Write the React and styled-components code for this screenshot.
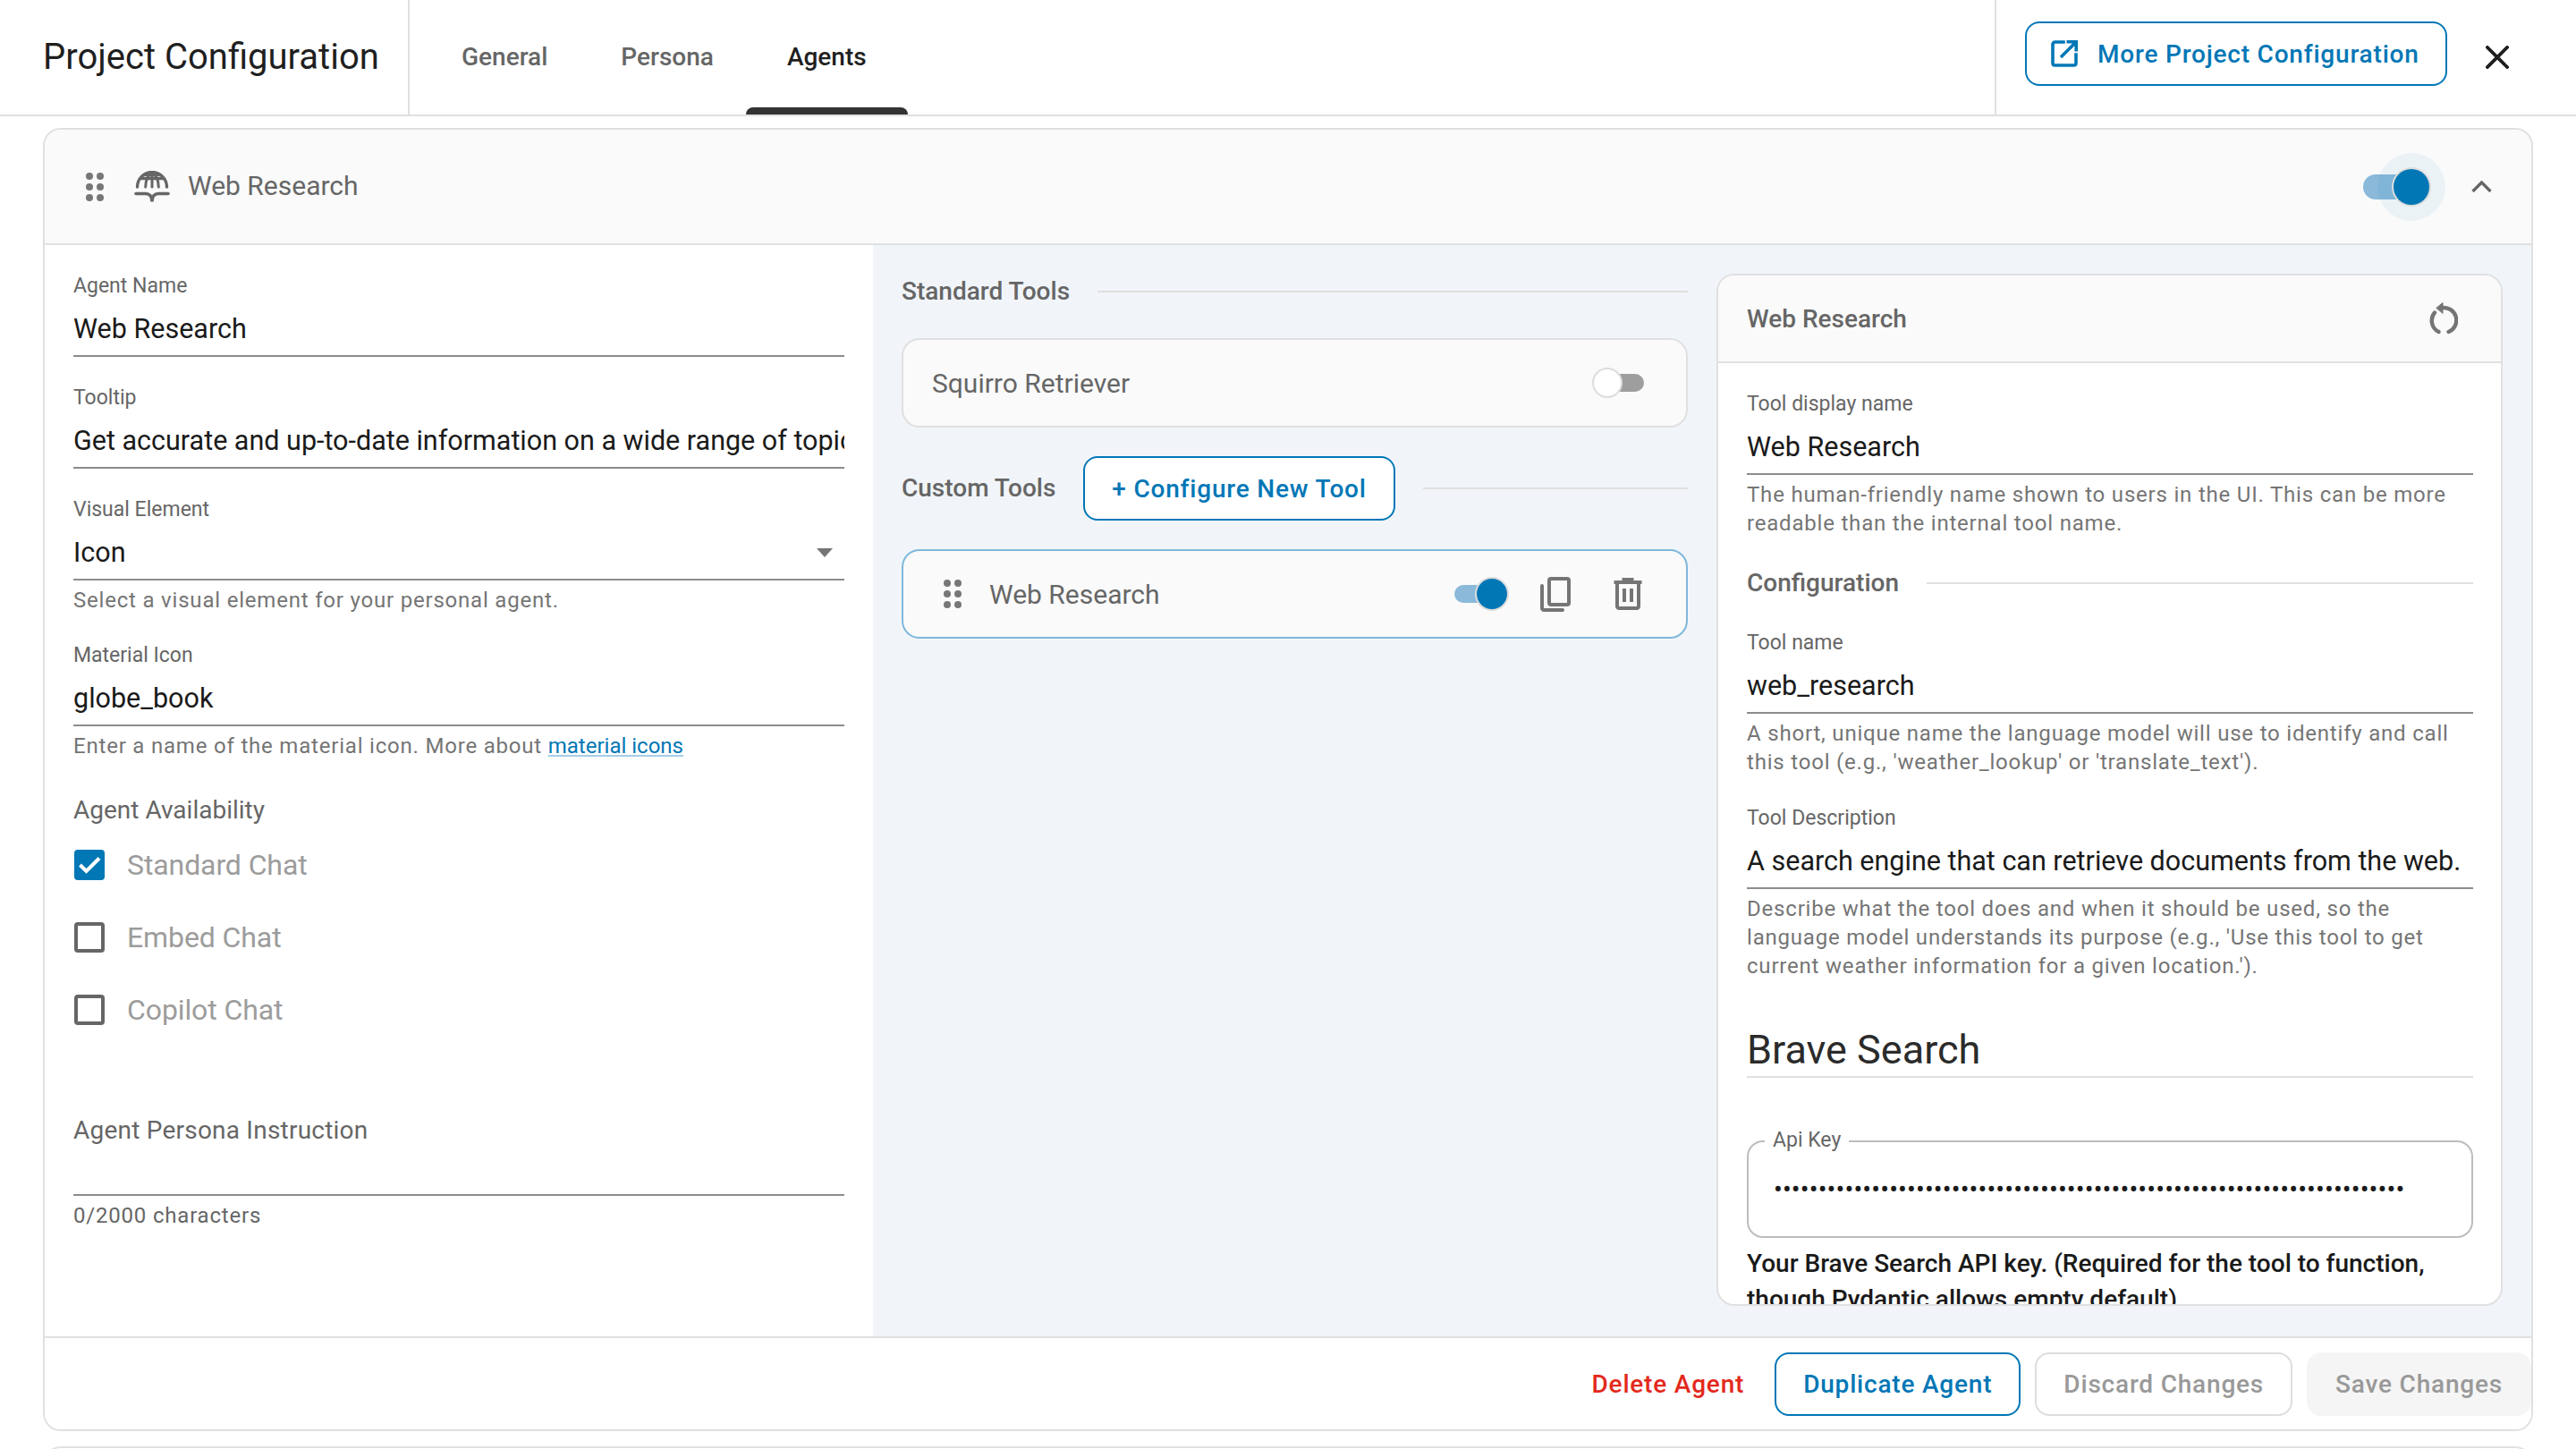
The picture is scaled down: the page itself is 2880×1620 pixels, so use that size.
import React from 'react';
import styled, { createGlobalStyle } from 'styled-components';

const primary = '#0277b6';
const line = '#e0e0e0';

const GlobalStyle = createGlobalStyle`
    html, body {
        margin: 0;
        padding: 0;
        background: #fff;
    }
    body {
        font-family: Roboto, "Liberation Sans", sans-serif;
        color: #1a1a1a;
        height: 1620px;
        overflow: hidden;
    }
    * {
        box-sizing: border-box;
    }
`;

const TopBar = styled.header`
    display: flex;
    align-items: stretch;
    height: 130px;
    border-bottom: 2px solid ${line};
`;

const PageTitle = styled.div`
    width: 458px;
    padding-left: 48px;
    border-right: 2px solid ${line};
    font-size: 40px;
    line-height: 128px;
    color: #1f1f1f;
`;

const Tabs = styled.nav`
    display: flex;
    flex: 1;
    padding-left: 17px;
`;

const Tab = styled.div`
    position: relative;
    padding: 0 41px;
    font-size: 28px;
    font-weight: 500;
    line-height: 128px;
    color: ${(p) => (p.$active ? '#1f1f1f' : '#666')};
    &::after {
        content: '';
        display: ${(p) => (p.$active ? 'block' : 'none')};
        position: absolute;
        left: -5px;
        right: -5px;
        bottom: 0;
        height: 8px;
        border-radius: 8px 8px 0 0;
        background: #333;
    }
`;

const TopActions = styled.div`
    display: flex;
    align-items: center;
    padding-left: 32px;
    padding-right: 75px;
    gap: 43px;
    border-left: 2px solid ${line};
`;

const OutlineButton = styled.button`
    display: inline-flex;
    align-items: center;
    justify-content: center;
    gap: 22px;
    height: ${(p) => (p.$tall ? '72px' : '71px')};
    padding: 0 30px;
    background: #fff;
    border: 2px solid ${(p) => (p.$muted ? '#ddd' : primary)};
    border-radius: 16px;
    font-family: inherit;
    font-size: 28px;
    font-weight: 500;
    letter-spacing: 0.8px;
    color: ${(p) => (p.$muted ? '#999' : primary)};
    white-space: nowrap;
`;

const MoreButton = styled(OutlineButton)`
    width: 472px;
    margin-bottom: 8px;
    justify-content: flex-start;
    padding: 0 26px 0 27px;
`;

const Card = styled.section`
    display: flex;
    flex-direction: column;
    height: 1457px;
    margin: 13px 48px 0;
    border: 2px solid ${line};
    border-radius: 20px;
    overflow: hidden;
`;

const CardHeader = styled.div`
    display: flex;
    align-items: center;
    height: 129px;
    flex: none;
    padding: 0 44px 0 46px;
    background: #fafafa;
    border-bottom: 2px solid ${line};
    font-size: 30px;
    color: #666;
`;

const HeaderLabel = styled.span`
    flex: 1;
    margin-left: 20px;
    padding-bottom: 3px;
`;

const CardBody = styled.div`
    display: flex;
    height: 1220px;
    flex: none;
`;

const LeftColumn = styled.div`
    display: flex;
    flex-direction: column;
    gap: 29px;
    flex: none;
    width: 926px;
    padding: 29px 32px 0;
`;

const RightArea = styled.div`
    display: grid;
    grid-template-columns: 1fr 1fr;
    gap: 32px;
    flex: 1;
    min-width: 0;
    padding: 32px 32px 34px;
    background: #f1f5f9;
`;

const ToolsColumn = styled.div`
    display: flex;
    flex-direction: column;
    gap: 32px;
    min-width: 0;
`;

const SectionRow = styled.div`
    display: flex;
    align-items: center;
    gap: 31px;
    font-size: 28px;
    font-weight: 500;
    line-height: 40px;
    color: #666;
    &::after {
        content: '';
        flex: 1;
        height: 2px;
        background: ${line};
    }
`;

const ToolCard = styled.div`
    display: flex;
    align-items: center;
    height: 100px;
    padding: 0 ${(p) => (p.$active ? '49px' : '47px')} 0 ${(p) => (p.$active ? '45px' : '32px')};
    background: #fafafa;
    border: 2px solid ${(p) => (p.$active ? '#7fb8dc' : line)};
    border-radius: 20px;
    font-size: 30px;
    color: #666;
`;

const ToolName = styled.span`
    flex: 1;
    margin-left: ${(p) => (p.$indent ? '31px' : '0')};
`;

const Field = styled.div`
    display: flex;
    flex-direction: column;
`;

const Label = styled.div`
    height: 32px;
    padding-top: 2px;
    font-size: 23px;
    line-height: 30px;
    color: #666;
`;

const Value = styled.div`
    display: flex;
    align-items: center;
    justify-content: space-between;
    height: 64px;
    padding-top: 3px;
    font-size: 30.5px;
    line-height: 59px;
    white-space: nowrap;
    overflow: hidden;
    color: #1a1a1a;
    border-bottom: 2px solid #8c8c8c;
`;

const Helper = styled.div`
    margin-top: 6px;
    font-size: 24px;
    line-height: 32px;
    letter-spacing: 0.8px;
    color: #757575;
`;

const HelperLink = styled.a`
    letter-spacing: 0;
    color: ${primary};
    text-decoration-color: #a5cde6;
`;

const GroupTitle = styled.div`
    margin-top: 7px;
    font-size: 28px;
    line-height: 40px;
    color: #666;
`;

const Checks = styled.div`
    margin-top: -29px;
`;

const CheckRow = styled.div`
    display: flex;
    align-items: center;
    gap: 25px;
    height: 81px;
    padding-left: 1px;
    font-size: 32px;
    letter-spacing: -0.1px;
    color: #9c9c9c;
`;

const CheckBox = styled.span`
    display: flex;
    align-items: center;
    justify-content: center;
    width: 34px;
    height: 34px;
    border-radius: 4px;
    background: ${(p) => (p.$checked ? primary : 'transparent')};
    border: ${(p) => (p.$checked ? 'none' : '4px solid #666')};
`;

const PersonaField = styled(Field)`
    margin-top: 46px;
`;

const PersonaLabel = styled.div`
    font-size: 28px;
    line-height: 40px;
    letter-spacing: 0.22px;
    color: #666;
`;

const PersonaInput = styled.div`
    height: 53px;
    border-bottom: 2px solid #8c8c8c;
`;

const CountText = styled(Helper)`
    color: #666;
`;

const DetailPanel = styled.aside`
    display: flex;
    flex-direction: column;
    min-width: 0;
    background: #fff;
    border: 2px solid ${line};
    border-radius: 20px;
    overflow: hidden;
`;

const DetailHeader = styled.div`
    display: flex;
    align-items: center;
    justify-content: space-between;
    flex: none;
    height: 98px;
    padding: 0 48px 0 32px;
    background: #fafafa;
    border-bottom: 2px solid ${line};
    font-size: 28px;
    font-weight: 500;
    color: #666;
`;

const DetailScroll = styled.div`
    display: flex;
    flex-direction: column;
    gap: 30px;
    flex: 1;
    min-height: 0;
    overflow: hidden;
    padding: 29px 31px 0 32px;
`;

const ConfigRow = styled(SectionRow)`
    margin-top: 1px;
`;

const SearchTitle = styled.h2`
    margin: 18px 0 0;
    padding: 0;
    font-size: 45px;
    font-weight: 400;
    line-height: 59px;
    color: #2b2b2b;
    border-bottom: 2px solid ${line};
`;

const KeyBox = styled.div`
    position: relative;
    display: flex;
    align-items: center;
    flex: none;
    height: 109px;
    margin-top: 40px;
    padding: 0 28px;
    border: 2px solid #bdbdbd;
    border-radius: 18px;
`;

const KeyLabel = styled.span`
    position: absolute;
    top: -17px;
    left: 18px;
    padding: 0 9px;
    background: #fff;
    font-size: 23px;
    line-height: 30px;
    color: #666;
`;

const KeyDots = styled.span`
    font-size: 29px;
    letter-spacing: 0.15px;
    white-space: nowrap;
    color: #1a1a1a;
`;

const KeyHelp = styled.div`
    margin-top: -21px;
    font-size: 28px;
    font-weight: 500;
    line-height: 40px;
    color: #1a1a1a;
`;

const CardFooter = styled.footer`
    display: flex;
    align-items: center;
    justify-content: flex-end;
    gap: 16px;
    flex: 1;
    background: #fff;
    border-top: 2px solid ${line};
`;

const DeleteButton = styled.button`
    padding: 0 18px 0 14px;
    background: none;
    border: none;
    font-family: inherit;
    font-size: 28px;
    font-weight: 500;
    letter-spacing: 0.8px;
    color: #e3291c;
`;

const SaveButton = styled(OutlineButton)`
    background: #f5f5f5;
    border-color: #f5f5f5;
    color: #999;
`;

const NextCard = styled.div`
    height: 40px;
    margin: 17px 48px 0;
    border: 2px solid ${line};
    border-radius: 20px 20px 0 0;
`;

const SwitchWrap = styled.span`
    position: relative;
    display: inline-block;
    flex: none;
    width: ${(p) => (p.$small ? '56px' : '68px')};
    height: ${(p) => (p.$small ? '20px' : '28px')};
    margin-right: ${(p) => (p.$halo ? '53px' : '0')};
    border-radius: 14px;
    background: ${(p) => (p.$on ? '#8ab9da' : '#9e9e9e')};
`;

const SwitchThumb = styled.span`
    position: absolute;
    top: 50%;
    width: ${(p) => (p.$small ? '34px' : '40px')};
    height: ${(p) => (p.$small ? '34px' : '40px')};
    border-radius: 50%;
    transform: translateY(-50%);
    left: ${(p) => (p.$on ? (p.$small ? '25px' : '34px') : '-2px')};
    background: ${(p) => (p.$on ? primary : '#fff')};
    border: ${(p) => (p.$on ? 'none' : '2px solid #ddd')};
    box-shadow: ${(p) => (p.$on ? '0 0 0 2px #dcdcdc' : 'none')};
`;

const Halo = styled.span`
    position: absolute;
    top: -24px;
    left: 16px;
    width: 76px;
    height: 76px;
    border-radius: 50%;
    background: rgba(2, 119, 182, 0.06);
`;

const ToolIcons = styled.div`
    display: flex;
    align-items: center;
    margin-left: 40px;
    gap: 48px;
`;

const DropArrow = styled.span`
    width: 0;
    height: 0;
    margin-right: 13px;
    border-left: 9.5px solid transparent;
    border-right: 9.5px solid transparent;
    border-top: 10px solid #757575;
`;

const Dots = ({ color = '#777' }) => (
    <svg width="20" height="32" viewBox="0 0 20 32" fill={color}>
        {[4, 16, 28].map((y) => (
            <React.Fragment key={y}>
                <circle cx="4" cy={y} r="4" />
                <circle cx="16" cy={y} r="4" />
            </React.Fragment>
        ))}
    </svg>
);

const GlobeBook = () => (
    <svg width="40" height="36" viewBox="0 0 40 36" fill="none" stroke="#666" strokeLinecap="round" style={{ marginLeft: 34 }}>
        <path d="M3.5 18A16.5 16.5 0 0 1 36.5 18" strokeWidth="3.4" />
        <path d="M7.5 8.5H32.5" strokeWidth="3.4" />
        <path d="M13 4.5H27" strokeWidth="3" />
        <path d="M12.7 18C12.7 11 15.5 5 20 2C24.5 5 27.3 11 27.3 18" strokeWidth="3" />
        <path d="M20 2V18" strokeWidth="3" />
        <path d="M2 25.5H13C17 25.5 20 28.5 20 34.5C20 28.5 23 25.5 27 25.5H38" strokeWidth="3.6" />
    </svg>
);

const ExternalIcon = () => (
    <svg width="30" height="30" viewBox="0 0 30 30" fill="none" stroke={primary} strokeWidth="3.6">
        <path d="M14 2H4.5C3 2 2 3 2 4.5V25.5C2 27 3 28 4.5 28H25.5C27 28 28 27 28 25.5V16" strokeLinecap="square" />
        <path d="M11 19L27 3M17.5 1.8H28.2V12.5" />
    </svg>
);

const CloseIcon = () => (
    <svg width="26" height="26" viewBox="0 0 26 26" stroke="#1f1f1f" strokeWidth="3.8" strokeLinecap="square">
        <path d="M2 2L24 24M24 2L2 24" />
    </svg>
);

const Chevron = () => (
    <svg width="23" height="13" viewBox="0 0 23 13" fill="none" stroke="#666" strokeWidth="3.4">
        <path d="M1.5 12L11.5 2L21.5 12" />
    </svg>
);

const CopyIcon = () => (
    <svg width="34" height="39" viewBox="0 0 34 39" fill="none" stroke="#757575" strokeWidth="4" strokeLinejoin="round">
        <rect x="10" y="2" width="22" height="29" rx="2" />
        <path d="M2 10V35C2 36 3 37 4 37H25" strokeLinecap="round" />
    </svg>
);

const TrashIcon = () => (
    <svg width="32" height="36" viewBox="0 0 32 36" fill="none" stroke="#757575" strokeWidth="4">
        <path d="M0.5 5H31.5" />
        <path d="M11 4V1.5H21V4" strokeWidth="3" />
        <path d="M4 6V32C4 33 5 34 6 34H26C27 34 28 33 28 32V6" />
        <path d="M12 12V27M20 12V27" />
    </svg>
);

const ResetIcon = () => (
    <svg width="32" height="36" viewBox="0 0 32 36" fill="none" stroke="#757575" strokeWidth="4.4" strokeLinecap="round">
        <path d="M6 11.5A14 14 0 0 0 10.5 33" />
        <path d="M14 6.2A14 14 0 0 1 21.5 33" />
        <path d="M8 6.2L15 0.5V12Z" fill="#757575" strokeWidth="1" strokeLinejoin="round" />
    </svg>
);

const CheckMark = () => (
    <svg width="26" height="22" viewBox="0 0 26 22" fill="none" stroke="#fff" strokeWidth="4">
        <path d="M2.5 11L9.5 18L24 3.5" />
    </svg>
);

const Switch = ({ on, small, halo }) => (
    <SwitchWrap $on={on} $small={small} $halo={halo}>
        {halo && <Halo />}
        <SwitchThumb $on={on} $small={small} />
    </SwitchWrap>
);

const availability = [
    { name: 'Standard Chat', checked: true },
    { name: 'Embed Chat', checked: false },
    { name: 'Copilot Chat', checked: false },
];

const App = () => {
    return (
        <>
            <GlobalStyle />
            <TopBar>
                <PageTitle>Project Configuration</PageTitle>
                <Tabs>
                    <Tab>General</Tab>
                    <Tab>Persona</Tab>
                    <Tab $active>Agents</Tab>
                </Tabs>
                <TopActions>
                    <MoreButton $tall>
                        <ExternalIcon />
                        More Project Configuration
                    </MoreButton>
                    <CloseIcon />
                </TopActions>
            </TopBar>

            <Card>
                <CardHeader>
                    <Dots />
                    <GlobeBook />
                    <HeaderLabel>Web Research</HeaderLabel>
                    <Switch on halo />
                    <Chevron />
                </CardHeader>

                <CardBody>
                    <LeftColumn>
                        <Field>
                            <Label>Agent Name</Label>
                            <Value>Web Research</Value>
                        </Field>
                        <Field>
                            <Label>Tooltip</Label>
                            <Value>Get accurate and up-to-date information on a wide range of topics</Value>
                        </Field>
                        <Field>
                            <Label>Visual Element</Label>
                            <Value>
                                Icon
                                <DropArrow />
                            </Value>
                            <Helper>Select a visual element for your personal agent.</Helper>
                        </Field>
                        <Field>
                            <Label>Material Icon</Label>
                            <Value>globe_book</Value>
                            <Helper>
                                Enter a name of the material icon. More about <HelperLink href="#icons">material icons</HelperLink>
                            </Helper>
                        </Field>
                        <GroupTitle>Agent Availability</GroupTitle>
                        <Checks>
                            {availability.map((item) => (
                                <CheckRow key={item.name}>
                                    <CheckBox $checked={item.checked}>{item.checked && <CheckMark />}</CheckBox>
                                    {item.name}
                                </CheckRow>
                            ))}
                        </Checks>
                        <PersonaField>
                            <PersonaLabel>Agent Persona Instruction</PersonaLabel>
                            <PersonaInput />
                            <CountText>0/2000 characters</CountText>
                        </PersonaField>
                    </LeftColumn>

                    <RightArea>
                        <ToolsColumn>
                            <SectionRow>Standard Tools</SectionRow>
                            <ToolCard>
                                <ToolName>Squirro Retriever</ToolName>
                                <Switch small />
                            </ToolCard>
                            <SectionRow>
                                Custom Tools
                                <OutlineButton $tall>+ Configure New Tool</OutlineButton>
                            </SectionRow>
                            <ToolCard $active>
                                <Dots />
                                <ToolName $indent>Web Research</ToolName>
                                <Switch on small />
                                <ToolIcons>
                                    <CopyIcon />
                                    <TrashIcon />
                                </ToolIcons>
                            </ToolCard>
                        </ToolsColumn>

                        <DetailPanel>
                            <DetailHeader>
                                Web Research
                                <ResetIcon />
                            </DetailHeader>
                            <DetailScroll>
                                <Field>
                                    <Label>Tool display name</Label>
                                    <Value>Web Research</Value>
                                    <Helper>The human-friendly name shown to users in the UI. This can be more readable than the internal tool name.</Helper>
                                </Field>
                                <ConfigRow>Configuration</ConfigRow>
                                <Field>
                                    <Label>Tool name</Label>
                                    <Value>web_research</Value>
                                    <Helper>A short, unique name the language model will use to identify and call this tool (e.g., 'weather_lookup' or 'translate_text').</Helper>
                                </Field>
                                <Field>
                                    <Label>Tool Description</Label>
                                    <Value>A search engine that can retrieve documents from the web.</Value>
                                    <Helper>Describe what the tool does and when it should be used, so the language model understands its purpose (e.g., 'Use this tool to get current weather information for a given location.').</Helper>
                                </Field>
                                <SearchTitle>Brave Search</SearchTitle>
                                <KeyBox>
                                    <KeyLabel>Api Key</KeyLabel>
                                    <KeyDots>{'•'.repeat(71)}</KeyDots>
                                </KeyBox>
                                <KeyHelp>Your Brave Search API key. (Required for the tool to function, though Pydantic allows empty default)</KeyHelp>
                            </DetailScroll>
                        </DetailPanel>
                    </RightArea>
                </CardBody>

                <CardFooter>
                    <DeleteButton>Delete Agent</DeleteButton>
                    <OutlineButton>Duplicate Agent</OutlineButton>
                    <OutlineButton $muted>Discard Changes</OutlineButton>
                    <SaveButton>Save Changes</SaveButton>
                </CardFooter>
            </Card>

            <NextCard />
        </>
    );
};

export default App;
